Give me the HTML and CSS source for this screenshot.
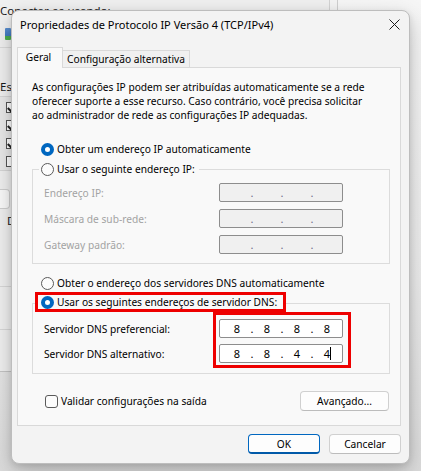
FILE: index.html
```html
<!DOCTYPE html>
<html lang="pt-BR">
<head>
<meta charset="utf-8">
<title>Propriedades de Protocolo IP Versão 4 (TCP/IPv4)</title>
<link rel="stylesheet" href="styles.css">
</head>
<body>
<div class="desktop">
  <div class="bgwin">
    <div class="bg-main">
      <div class="bg-caption">Conectar-se usando:</div>
      <div class="bg-strip">
        <div class="bg-icon"></div>
        <div class="bg-sep"></div>
        <div class="bg-head">Est</div>
        <div class="bg-list">
          <div class="bg-item"><span class="bg-check on"></span></div>
          <div class="bg-item"><span class="bg-check on"></span></div>
          <div class="bg-item"><span class="bg-check on"></span></div>
          <div class="bg-item"><span class="bg-check"></span></div>
        </div>
        <div class="bg-btn"></div>
        <div class="bg-group">D</div>
        <div class="bg-line"></div>
        <div class="bg-line second"></div>
      </div>
    </div>
    <div class="bg-rim"></div>
  </div>

  <div class="dialog">
    <div class="titlebar">
      <span class="title">Propriedades de Protocolo IP Versão 4 (TCP/IPv4)</span>
      <svg class="close" width="11" height="11" viewBox="0 0 11 11"><path d="M0.5 0.5L10.5 10.5M10.5 0.5L0.5 10.5"/></svg>
    </div>
    <div class="tabs">
      <div class="tab active">Geral</div>
      <div class="tab">Configuração alternativa</div>
    </div>
    <div class="panel">
      <p class="intro">As configurações IP podem ser atribuídas automaticamente se a rede<br>oferecer suporte a esse recurso. Caso contrário, você precisa solicitar<br>ao administrador de rede as configurações IP adequadas.</p>

      <div class="radio-row"><span class="radio checked"></span><span>Obter um endereço IP automaticamente</span></div>

      <div class="group">
        <div class="legend"><span class="radio"></span><span>Usar o seguinte endereço IP:</span></div>
        <div class="rows ip-rows">
          <div class="frow disabled"><span class="flabel">Endereço IP:</span><span class="ipbox off"><span class="oct"></span><span class="dot">.</span><span class="oct"></span><span class="dot">.</span><span class="oct"></span><span class="dot">.</span><span class="oct"></span></span></div>
          <div class="frow disabled"><span class="flabel">Máscara de sub-rede:</span><span class="ipbox off"><span class="oct"></span><span class="dot">.</span><span class="oct"></span><span class="dot">.</span><span class="oct"></span><span class="dot">.</span><span class="oct"></span></span></div>
          <div class="frow disabled"><span class="flabel">Gateway padrão:</span><span class="ipbox off"><span class="oct"></span><span class="dot">.</span><span class="oct"></span><span class="dot">.</span><span class="oct"></span><span class="dot">.</span><span class="oct"></span></span></div>
        </div>
      </div>

      <div class="radio-row dns-auto"><span class="radio"></span><span>Obter o endereço dos servidores DNS automaticamente</span></div>

      <div class="group dns">
        <div class="legend marked"><span class="radio checked"></span><span>Usar os seguintes endereços de servidor DNS:</span></div>
        <div class="rows dns-rows">
          <div class="frow"><span class="flabel">Servidor DNS preferencial:</span><span class="ipbox"><span class="oct">8</span><span class="dot">.</span><span class="oct">8</span><span class="dot">.</span><span class="oct">8</span><span class="dot">.</span><span class="oct">8</span></span></div>
          <div class="frow"><span class="flabel">Servidor DNS alternativo:</span><span class="ipbox"><span class="oct">8</span><span class="dot">.</span><span class="oct">8</span><span class="dot">.</span><span class="oct">4</span><span class="dot">.</span><span class="oct">4<span class="caret"></span></span></span></div>
          <div class="mark"></div>
        </div>
      </div>

      <div class="opts">
        <div class="check-row"><span class="checkbox"></span><span>Validar configurações na saída</span></div>
        <button class="btn adv">Avançado...</button>
      </div>
    </div>
    <div class="footer">
      <button class="btn primary">OK</button>
      <button class="btn">Cancelar</button>
    </div>
  </div>
</div>
</body>
</html>
```
FILE: styles.css
```css
* { box-sizing: border-box; }
html, body { margin: 0; padding: 0; }
body {
  width: 421px;
  height: 471px;
  overflow: hidden;
  font-family: "Noto Sans", "Liberation Sans", sans-serif;
  font-size: 10.2px;
  color: #000;
}
.desktop {
  position: relative;
  width: 421px;
  height: 471px;
  overflow: hidden;
  background: linear-gradient(#f6f6f6 0, #ececec 60%, #dcdcdc 100%);
}

/* background window */
.bgwin {
  position: absolute;
  left: 0;
  top: 0;
  width: 338px;
  height: 372px;
  display: flex;
  background: #f0f0f0;
  border-right: 1px solid #cfcfcf;
  border-bottom: 1px solid #c4c4c4;
  overflow: hidden;
}
.bg-main { width: 330px; border-right: 1px solid #d3d3d3; }
.bg-rim { flex: 1; background: #f4f4f4; }
.bg-caption { margin-top: 4px; line-height: 14px; font-size: 11.5px; color: #1a1a1a; white-space: nowrap; }
.bg-strip { width: 12px; overflow: hidden; font-size: 11.5px; color: #1a1a1a; }
.bg-icon { width: 6px; height: 12px; margin: 10px 0 0 5px; background: linear-gradient(#5a8fd0 0, #3f78c0 70%, #4cae4c 70%); border-radius: 1px; }
.bg-sep { height: 1px; background: #dadada; margin-top: 7px; }
.bg-head { margin-top: 32px; line-height: 14px; }
.bg-list { margin-top: 2px; background: #e9e9e9; border-top: 1px solid #d6d6d6; border-bottom: 1px solid #d6d6d6; padding: 1px 0 0; }
.bg-item { height: 18px; display: flex; align-items: center; padding-left: 6px; }
.bg-check { flex: none; width: 11px; height: 11px; border: 1px solid #555; background: #fff; position: relative; }
.bg-check.on::after { content: ""; position: absolute; left: 2px; top: 1px; width: 4px; height: 6px; border: solid #222; border-width: 0 2px 2px 0; transform: rotate(45deg); }
.bg-btn { margin-top: 18px; width: 10px; height: 20px; border: 1px solid #cfcfcf; border-left: 0; border-radius: 0 4px 4px 0; background: #fafafa; }
.bg-group { margin-top: 5px; padding-left: 7px; line-height: 14px; }
.bg-line { height: 1px; background: #d8d8d8; margin-top: 58px; }
.bg-line.second { margin-top: 42px; }

/* dialog */
.dialog {
  position: absolute;
  left: 11px;
  top: 10px;
  width: 399px;
  height: 454px;
  background: #f3f3f3;
  border: 1px solid #bdbdbd;
  border-radius: 8px;
  box-shadow: 0 8px 22px rgba(0, 0, 0, 0.22), 0 2px 6px rgba(0, 0, 0, 0.1);
}
.titlebar {
  height: 36px;
  display: flex;
  justify-content: space-between;
  align-items: flex-start;
  padding: 6px 9px 0 8px;
}
.title { line-height: 16px; font-size: 11px; }
.close { margin-top: 2px; stroke: #1a1a1a; stroke-width: 1; fill: none; }

.tabs {
  display: flex;
  align-items: flex-end;
  height: 20px;
  margin-left: 5px;
  position: relative;
  z-index: 1;
}
.tab {
  height: 17px;
  width: 127px;
  border: 1px solid #d9d9d9;
  border-left: 0;
  border-bottom: 0;
  background: #f0f0f0;
  line-height: 17px;
  text-align: center;
  white-space: nowrap;
}
.tab.active {
  width: 46px;
  height: 21px;
  margin-bottom: -1px;
  border-left: 1px solid #d9d9d9;
  background: #f9f9f9;
  line-height: 18px;
  padding-right: 3px;
}

.panel {
  margin-left: 5px;
  width: 384px;
  height: 359px;
  background: #f9f9f9;
  border: 1px solid #d9d9d9;
  padding: 12px 10px 0 14px;
}
.intro { margin: 0; line-height: 14px; white-space: nowrap; }

.radio-row {
  display: flex;
  align-items: center;
  gap: 3px;
  height: 16px;
  margin: 19px 0 0 9px;
  white-space: nowrap;
}
.radio-row.dns-auto { margin-top: 11px; }
.radio {
  flex: none;
  width: 13px;
  height: 13px;
  border-radius: 50%;
  border: 1px solid #5a5a5a;
  background: #fcfcfc;
}
.radio.checked { border: 4px solid #0067c0; background: #fff; }

.group {
  border: 1px solid #dcdcdc;
  margin-top: 12px;
  padding: 0 0 9px 11px;
  width: 358px;
}
.group.dns { padding-bottom: 10px; }
.legend {
  display: flex;
  align-items: center;
  gap: 3px;
  width: fit-content;
  height: 16px;
  margin: -9px 0 0 -5px;
  padding: 0 4px 0 2px;
  background: #f9f9f9;
  white-space: nowrap;
}
.legend.marked {
  height: 20px;
  margin: -12px 0 0 -9px;
  padding: 0 6px 0 3px;
  border: 3px solid #ee0000;
}
.rows { display: flex; flex-direction: column; gap: 7px; margin-top: 6px; }
.dns-rows { gap: 6px; margin-top: 7px; position: relative; }
.frow { display: flex; align-items: center; height: 19px; }
.flabel { width: 175px; white-space: nowrap; }
.frow.disabled .flabel { color: #a3a3a3; }
.ipbox {
  display: flex;
  align-items: center;
  width: 124px;
  height: 19px;
  padding-left: 6px;
  border: 1px solid #8d8d8d;
  border-radius: 2px;
  background: #fff;
  font-size: 11px;
}
.ipbox.off { background: #f0f0f0; }
.oct { width: 22px; text-align: center; position: relative; }
.dot { width: 8px; text-align: center; }
.ipbox.off .dot { color: #6d6d8a; }
.caret { position: absolute; left: 14px; top: 1px; width: 1px; height: 13px; background: #000; }
.mark {
  position: absolute;
  left: 169px;
  top: -7px;
  width: 138px;
  height: 56px;
  border: 3px solid #ee0000;
}

.opts {
  display: flex;
  align-items: center;
  justify-content: space-between;
  height: 20px;
  margin-top: 17px;
  padding: 0 1px 0 13px;
}
.check-row { display: flex; align-items: center; gap: 3px; white-space: nowrap; }
.checkbox { flex: none; width: 13px; height: 13px; border: 1px solid #5a5a5a; border-radius: 3px; background: #fcfcfc; }

.btn {
  font: inherit;
  color: #000;
  height: 20px;
  padding: 0;
  background: #fdfdfd;
  border: 1px solid #d0d0d0;
  border-bottom-color: #bcbcbc;
  border-radius: 4px;
}
.btn.adv { width: 89px; }
.footer {
  display: flex;
  justify-content: flex-end;
  gap: 9px;
  margin-top: 8px;
  padding-right: 8px;
}
.footer .btn { width: 72px; }
.btn.primary { border: 1px solid #0067c0; border-bottom: 2px solid #0059a8; background: #fdfdfd; }
```
